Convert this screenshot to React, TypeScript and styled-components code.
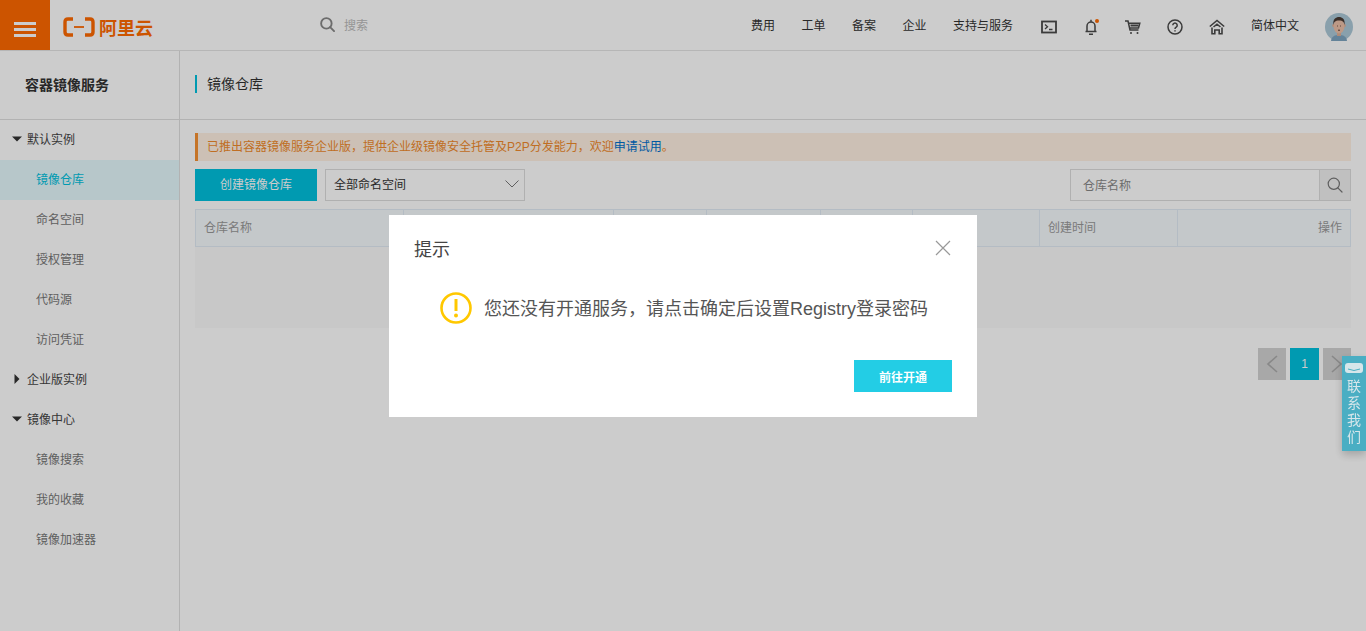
import React from "react";
import styled, {createGlobalStyle} from "styled-components";

const Global = createGlobalStyle`
  html, body {
    margin: 0;
    height: 100%;
    overflow: hidden;
    background: #fff;
    font-family: "Liberation Sans", "Noto Sans CJK SC", sans-serif;
    font-size: 12px;
    color: #333;
  }
`

const Page = styled.div`
  height: 631px;
  display: flex;
  flex-direction: column;
`

const TopBar = styled.header`
  height: 50px;
  flex: none;
  display: flex;
  align-items: center;
  border-bottom: 1px solid #e4e4e4;
  box-sizing: content-box;
`

const MenuButton = styled.div`
  width: 50px;
  height: 50px;
  box-sizing: border-box;
  padding-top: 8px;
  background: #ff6a00;
  display: flex;
  flex-direction: column;
  align-items: center;
  justify-content: center;
  gap: 3px;
`

const MenuBar = styled.span`
  width: 22px;
  height: 3px;
  background: #fff;
`

const Logo = styled.div`
  width: 257px;
  margin-left: 13px;
  padding-top: 4px;
  display: flex;
  align-items: center;
  gap: 4px;
  color: #ff6a00;
  font-size: 18px;
  font-weight: 700;
  font-family: "Noto Sans CJK SC", sans-serif;
`

const SearchBox = styled.div`
  display: flex;
  align-items: center;
  gap: 9px;
  color: #bbb;
  padding-bottom: 2px;
`

const TopNav = styled.nav`
  margin-left: auto;
  margin-right: 13px;
  padding-top: 4px;
  display: flex;
  align-items: center;
  gap: 26px;
  color: #333;
`

const NavLinks = styled.div`
  display: flex;
  gap: 26.5px;
  margin-right: 2px;
  padding-bottom: 5px;
`

const NavLabel = styled.span`
  padding-bottom: 5px;
`

const IconSlot = styled.span`
  display: flex;
  position: relative;
  width: 16px;
  justify-content: center;
`

const Dot = styled.i`
  position: absolute;
  top: 0;
  right: 0;
  width: 4px;
  height: 4px;
  border-radius: 50%;
  background: #ff6a00;
`

const Body = styled.div`
  flex: 1;
  display: flex;
  min-height: 0;
`

const Sidebar = styled.aside`
  width: 180px;
  flex: none;
  box-sizing: border-box;
  border-right: 1px solid #dfdfdf;
`

const SideTitle = styled.div`
  height: 69px;
  box-sizing: border-box;
  border-bottom: 1px solid #dfdfdf;
  padding: 0 0 2px 25px;
  display: flex;
  align-items: center;
  font-size: 14px;
  font-weight: 700;
  color: #333;
`

const TreeRow = styled.div<{$active?: boolean; $child?: boolean}>`
  height: 40px;
  box-sizing: border-box;
  display: flex;
  align-items: center;
  padding: 0 0 3px ${p => (p.$child ? "36px" : "12px")};
  background: ${p => (p.$active ? "#e5f9fd" : "transparent")};
  color: ${p => (p.$active ? "#00c1de" : p.$child ? "#777" : "#444")};
`

const CaretSlot = styled.span`
  width: 10px;
  margin-right: 5px;
  display: flex;
`

const Main = styled.main`
  flex: 1;
  min-width: 0;
`

const SubHeader = styled.div`
  height: 69px;
  box-sizing: border-box;
  border-bottom: 1px solid #dfdfdf;
  display: flex;
  align-items: center;
  padding: 0 0 2px 15px;
`

const Crumb = styled.div`
  height: 18px;
  border-left: 2px solid #00c1de;
  padding-left: 10px;
  font-size: 14px;
  line-height: 18px;
  color: #333;
`

const Content = styled.div`
  padding: 13px 15px 0;
`

const Notice = styled.div`
  height: 28px;
  box-sizing: border-box;
  background: #fff1e3;
  border-left: 3px solid #f79232;
  padding-left: 9px;
  line-height: 28px;
  color: #f08a2c;
`

const NoticeLink = styled.span`
  color: #0070cc;
`

const Toolbar = styled.div`
  margin-top: 8px;
  height: 32px;
  display: flex;
  gap: 8px;
`

const PrimaryButton = styled.div`
  width: 122px;
  box-sizing: border-box;
  padding-bottom: 3px;
  background: #00c1de;
  color: #fff;
  display: flex;
  align-items: center;
  justify-content: center;
`

const Select = styled.div`
  width: 200px;
  box-sizing: border-box;
  border: 1px solid #ddd;
  display: flex;
  align-items: center;
  justify-content: space-between;
  padding: 0 5px 3px 8px;
  color: #333;
`

const Search = styled.div`
  margin-left: auto;
  width: 281px;
  box-sizing: border-box;
  border: 1px solid #ddd;
  display: flex;
  color: #888;
`

const SearchInput = styled.div`
  flex: 1;
  padding: 0 0 2px 12px;
  display: flex;
  align-items: center;
`

const SearchBtn = styled.div`
  width: 30px;
  background: #f0f0f0;
  border-left: 1px solid #ddd;
  display: flex;
  align-items: center;
  justify-content: center;
`

const TableHead = styled.div`
  margin-top: 8px;
  height: 38px;
  box-sizing: border-box;
  display: grid;
  grid-template-columns: 207px 210px 93px 114px 92px 127px 138px 1fr;
  border: 1px solid #e1ebf5;
  background: #f6fafd;
  color: #999;
`

const HeadCell = styled.div<{$right?: boolean}>`
  display: flex;
  align-items: center;
  justify-content: ${p => (p.$right ? "flex-end" : "flex-start")};
  padding: 0 8px 3px;
  border-left: 1px solid #e1ebf5;
  &:first-child {
    border-left: 0;
    padding-left: 8px;
  }
`

const TableEmpty = styled.div`
  height: 81px;
  background: #fafafa;
`

const Pager = styled.div`
  margin-top: 20px;
  display: flex;
  justify-content: flex-end;
  gap: 4px;
`

const PageBtn = styled.div<{$current?: boolean}>`
  width: ${p => (p.$current ? "29px" : "28px")};
  height: 32px;
  background: ${p => (p.$current ? "#00c1de" : "#d2d2d2")};
  color: #fff;
  display: flex;
  align-items: center;
  justify-content: center;
`

const Overlay = styled.div`
  position: fixed;
  inset: 0;
  background: rgba(0, 0, 0, 0.2);
  display: flex;
  justify-content: center;
  align-items: flex-start;
  padding-top: 215px;
`

const Dialog = styled.div`
  width: 588px;
  height: 202px;
  box-sizing: border-box;
  background: #fff;
  padding: 0 25px 25px;
  display: flex;
  flex-direction: column;
`

const DialogHead = styled.div`
  height: 66px;
  padding-right: 1px;
  display: flex;
  align-items: center;
  justify-content: space-between;
  font-size: 18px;
  color: #444;
`

const DialogMessage = styled.div`
  flex: 1;
  padding: 11px 0 0 26px;
  display: flex;
  align-items: flex-start;
  gap: 12px;
  font-size: 18px;
  line-height: 34px;
  color: #555;
`

const DialogFoot = styled.div`
  display: flex;
  justify-content: flex-end;
`

const OpenButton = styled.div`
  width: 98px;
  height: 32px;
  background: #23cde5;
  color: #fff;
  font-weight: 700;
  display: flex;
  align-items: center;
  justify-content: center;
`

const ContactTab = styled.div`
  position: fixed;
  right: 0;
  top: 356px;
  width: 24px;
  height: 95px;
  background: #4aaec3;
  color: #d6e6ea;
  font-size: 14px;
  line-height: 17px;
  text-align: center;
  box-shadow: 0 4px 8px rgba(0, 0, 0, 0.2);
  display: flex;
  flex-direction: column;
  align-items: center;
  padding-top: 7px;
  box-sizing: border-box;
`

const TabMark = styled.svg`
  margin-bottom: 5px;
  flex: none;
`

const Ico = ({children, w = 16, h = 16, sw = 1.5}: {children: React.ReactNode; w?: number; h?: number; sw?: number}) => (
    <svg width={w} height={h} viewBox={`0 0 ${w} ${h}`} fill="none" stroke="#4a4a4a" strokeWidth={sw}>
        {children}
    </svg>
)

const Caret = ({open}: {open: boolean}) => (
    <svg width="10" height="10" viewBox="0 0 10 10" fill="#333">
        {open ? <path d="M0 2.5h10L5 7.5z"/> : <path d="M2.5 0v10L7.5 5z"/>}
    </svg>
)

const Chevron = ({left}: {left?: boolean}) => (
    <svg width="12" height="20" viewBox="0 0 12 20" fill="none" stroke="#aaa" strokeWidth="1.6">
        <path d={left ? "M11 2 2 10l9 8" : "M1 2l9 8-9 8"}/>
    </svg>
)

const SearchGlyph = ({color, size, sw}: {color: string; size: number; sw: number}) => (
    <svg width={size} height={size} viewBox="0 0 16 16" fill="none" stroke={color} strokeWidth={sw}>
        <circle cx="6.8" cy="6.8" r="5.6"/>
        <path d="M10.8 10.8 15 15" strokeLinecap="round"/>
    </svg>
)

const navText = ["费用", "工单", "备案", "企业", "支持与服务"];
const columns = ["仓库名称", "", "", "", "", "", "创建时间"];

export default function App() {
    return (
        <Page>
            <Global/>
            <TopBar>
                <MenuButton>
                    <MenuBar/>
                    <MenuBar/>
                    <MenuBar/>
                </MenuButton>
                <Logo>
                    <svg width="32" height="20" viewBox="0 0 32 20" fill="none" stroke="#ff6a00" strokeWidth="3.4">
                        <path d="M10 2H5Q2 2 2 5v10q0 3 3 3h5M22 2h5q3 0 3 3v10q0 3-3 3h-5"/>
                        <path d="M11 10h10" strokeWidth="1.8"/>
                    </svg>
                    阿里云
                </Logo>
                <SearchBox>
                    <SearchGlyph color="#888" size={15} sw={2}/>
                    搜索
                </SearchBox>
                <TopNav>
                    <NavLinks>
                        {navText.map(t => <span key={t}>{t}</span>)}
                    </NavLinks>
                    <IconSlot>
                        <Ico sw={1.8}>
                            <rect x="1" y="2.5" width="14" height="11"/>
                            <path d="M4 5.5l2.5 2.2L4 9.9M8 10.5h3.5" strokeWidth="1.3"/>
                        </Ico>
                    </IconSlot>
                    <IconSlot>
                        <Ico w={14}>
                            <path d="M3 12V7a4 4 0 0 1 8 0v5M1.5 12.5h11M5 15.2h4M7 .8v2"/>
                        </Ico>
                        <Dot/>
                    </IconSlot>
                    <IconSlot>
                        <Ico>
                            <path d="M0 2h3l2 9h8.5M3.6 4.2h11.2L13.5 9H4.8"/>
                            <path d="M5.5 5.5h8v2h-8z" fill="#4a4a4a" stroke="none"/>
                            <circle cx="6" cy="14" r="1" fill="#4a4a4a" stroke="none"/>
                            <circle cx="12.5" cy="14" r="1" fill="#4a4a4a" stroke="none"/>
                        </Ico>
                    </IconSlot>
                    <IconSlot>
                        <Ico>
                            <circle cx="8" cy="8" r="7"/>
                            <path d="M5.8 6.2a2.2 2.2 0 1 1 3.4 1.9c-.8.5-1.2 1-1.2 1.9M8 11.2v1.4"/>
                        </Ico>
                    </IconSlot>
                    <IconSlot>
                        <Ico sw={1.6}>
                            <path d="M.8 7.5 8 1.5l7.2 6M4.5 8 8 5.2 11.5 8M3 8.5v6.3h2.8V11h4.4v3.8H13V8.5"/>
                        </Ico>
                    </IconSlot>
                    <NavLabel>简体中文</NavLabel>
                    <svg width="28" height="28" viewBox="0 0 28 28">
                        <circle cx="14" cy="14" r="14" fill="#acc8d7"/>
                        <path d="M6 28c.5-5 4-6 8-6s7.500 1 8 6z" fill="#7ea4c0"/>
                        <rect x="12" y="18" width="4" height="5" fill="#dcae96"/>
                        <ellipse cx="8.300" cy="12.500" rx="1" ry="1.800" fill="#dcae96"/>
                        <ellipse cx="19.700" cy="12.500" rx="1" ry="1.800" fill="#dcae96"/>
                        <ellipse cx="14" cy="13" rx="5.500" ry="7.500" fill="#ecc0a8"/>
                        <path d="M8.500 12c-1-6 2.500-8 5.500-8s6.500 2 5.500 8c-.5-3-1.500-4.500-5.500-4.500S9 9 8.500 12z" fill="#4a3b34"/>
                        <path d="M12 13h.8M15.200 13h.8M13 17.200h2" stroke="#5a3f35" strokeWidth="1"/>
                    </svg>
                </TopNav>
            </TopBar>
            <Body>
                <Sidebar>
                    <SideTitle>容器镜像服务</SideTitle>
                    <TreeRow><CaretSlot><Caret open/></CaretSlot>默认实例</TreeRow>
                    <TreeRow $child $active>镜像仓库</TreeRow>
                    <TreeRow $child>命名空间</TreeRow>
                    <TreeRow $child>授权管理</TreeRow>
                    <TreeRow $child>代码源</TreeRow>
                    <TreeRow $child>访问凭证</TreeRow>
                    <TreeRow><CaretSlot><Caret open={false}/></CaretSlot>企业版实例</TreeRow>
                    <TreeRow><CaretSlot><Caret open/></CaretSlot>镜像中心</TreeRow>
                    <TreeRow $child>镜像搜索</TreeRow>
                    <TreeRow $child>我的收藏</TreeRow>
                    <TreeRow $child>镜像加速器</TreeRow>
                </Sidebar>
                <Main>
                    <SubHeader><Crumb>镜像仓库</Crumb></SubHeader>
                    <Content>
                        <Notice>
                            已推出容器镜像服务企业版，提供企业级镜像安全托管及P2P分发能力，欢迎<NoticeLink>申请试用</NoticeLink>。
                        </Notice>
                        <Toolbar>
                            <PrimaryButton>创建镜像仓库</PrimaryButton>
                            <Select>
                                全部命名空间
                                <svg width="14" height="8" viewBox="0 0 14 8" fill="none" stroke="#777" strokeWidth="1">
                                    <path d="M.5.5 7 7l6.5-6.5"/>
                                </svg>
                            </Select>
                            <Search>
                                <SearchInput>仓库名称</SearchInput>
                                <SearchBtn><SearchGlyph color="#777" size={16} sw={1.2}/></SearchBtn>
                            </Search>
                        </Toolbar>
                        <TableHead>
                            {columns.map((c, i) => <HeadCell key={i}>{c}</HeadCell>)}
                            <HeadCell $right>操作</HeadCell>
                        </TableHead>
                        <TableEmpty/>
                        <Pager>
                            <PageBtn><Chevron left/></PageBtn>
                            <PageBtn $current>1</PageBtn>
                            <PageBtn><Chevron/></PageBtn>
                        </Pager>
                    </Content>
                </Main>
            </Body>
            <Overlay>
                <Dialog>
                    <DialogHead>
                        提示
                        <svg width="16" height="16" viewBox="0 0 16 16" fill="none" stroke="#999" strokeWidth="1.2">
                            <path d="M1 1l14 14M15 1 1 15"/>
                        </svg>
                    </DialogHead>
                    <DialogMessage>
                        <svg width="32" height="32" viewBox="0 0 32 32" fill="none">
                            <circle cx="16" cy="16" r="14.5" stroke="#ffc800" strokeWidth="2.6"/>
                            <path d="M16 7v12" stroke="#ffc800" strokeWidth="3"/>
                            <circle cx="16" cy="23.5" r="2" fill="#ffc800"/>
                        </svg>
                        您还没有开通服务，请点击确定后设置Registry登录密码
                    </DialogMessage>
                    <DialogFoot><OpenButton>前往开通</OpenButton></DialogFoot>
                </Dialog>
            </Overlay>
            <ContactTab>
                <TabMark width="18" height="10" viewBox="0 0 18 10" fill="#d6e6ea">
                    <rect x="0" y="0" width="18" height="10" rx="3"/>
                    <path d="M3 6q6 3 12 0" fill="none" stroke="#4aaec3"/>
                </TabMark>
                <span>联</span><span>系</span><span>我</span><span>们</span>
            </ContactTab>
        </Page>
    )
}
